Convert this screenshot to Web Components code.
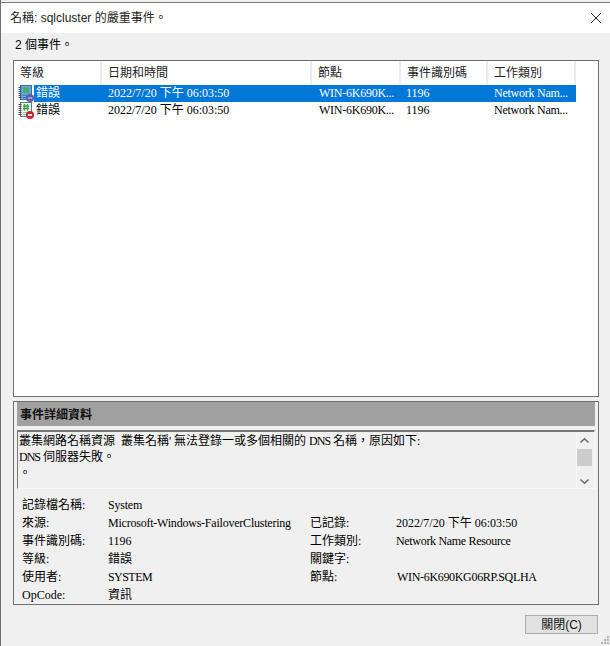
<!DOCTYPE html>
<html lang="zh-Hant">
<head>
<meta charset="utf-8">
<title>sqlcluster</title>
<style>
  html, body { margin: 0; padding: 0; background: #f0f0f0; }
  body { font: 12px/16px "Liberation Serif", "Noto Sans CJK TC", serif; color: #000; }
</style>
</head>
<body>
<event-dialog>
  <dialog-title slot="title">名稱: sqlcluster 的嚴重事件。</dialog-title>
  <span slot="count">2 個事件。</span>
  <event-list slot="list"></event-list>
  <event-details slot="details"></event-details>
  <push-button slot="button">關閉(C)</push-button>
</event-dialog>

<script>
const UI_FONT = '"Liberation Sans", "Noto Sans CJK TC", sans-serif';

class EventDialog extends HTMLElement {
  constructor() {
    super();
    this.attachShadow({ mode: 'open' });
    this.shadowRoot.innerHTML = `
      <style>
        :host { display: block; width: 610px; height: 646px; box-sizing: border-box; border-left: 1px solid #6f6f6f; padding-top: 2px; position: relative; overflow: hidden; }
        .count { height: 27px; padding: 3px 0 0 14px; box-sizing: border-box; line-height: 18px; font-family: ${UI_FONT}; }
        .main { padding: 0 11px 0 12px; display: flex; flex-direction: column; gap: 4px; }
        .foot { display: flex; justify-content: flex-end; padding: 10px 12px 0 0; }
        .grip { position: absolute; right: 1px; bottom: 2px; width: 8px; height: 8px; }
      </style>
      <slot name="title"></slot>
      <div class="count"><slot name="count"></slot></div>
      <div class="main">
        <slot name="list"></slot>
        <slot name="details"></slot>
      </div>
      <div class="foot"><slot name="button"></slot></div>
      <svg class="grip" viewBox="0 0 8 8" fill="#b4b4b4">
        <rect x="6" y="0" width="2" height="2"/>
        <rect x="3" y="3" width="2" height="2"/><rect x="6" y="3" width="2" height="2"/>
        <rect x="0" y="6" width="2" height="2"/><rect x="3" y="6" width="2" height="2"/><rect x="6" y="6" width="2" height="2"/>
      </svg>
    `;
  }
}

class DialogTitle extends HTMLElement {
  constructor() {
    super();
    this.attachShadow({ mode: 'open' });
    this.shadowRoot.innerHTML = `
      <style>
        :host { display: flex; align-items: center; justify-content: space-between; height: 31px; box-sizing: border-box; border-top: 1px solid #7a7a7a; background: #fff; padding: 0 9px; font: 12px/16px ${UI_FONT}; color: #222; }
        svg { width: 10px; height: 10px; }
      </style>
      <span><slot></slot></span>
      <svg viewBox="0 0 10 10" fill="none" stroke="#222" stroke-width="1"><path d="M0 0 L10 10 M10 0 L0 10"/></svg>
    `;
  }
}

class EventIcon extends HTMLElement {
  constructor() {
    super();
    this.attachShadow({ mode: 'open' });
    const sel = this.hasAttribute('selected');
    const badge = sel ? '#5f5ea6' : '#c9252d';
    const page = sel ? '#6aa5da' : '#eef1f3';
    const edge = sel ? '#3a6ea8' : '#6d7b88';
    const lines = sel ? '#3f7fc0' : '#a9b4bd';
    const hash = sel ? '#3fae5a' : '#2fa53c';
    this.shadowRoot.innerHTML = `
      <style>:host { display: block; width: 16px; height: 17px; } svg { display: block; }</style>
      <svg width="16" height="17" viewBox="0 0 16 17">
        <rect x="2.5" y="0.5" width="11" height="14" fill="${page}" stroke="${edge}"/>
        <path d="M0.5 2.5h3M0.5 4.5h3M0.5 6.5h3M0.5 8.5h3M0.5 10.5h3M0.5 12.5h3" stroke="${sel ? '#2c5a8c' : '#4a4a4a'}"/>
        <path d="M6.5 2v6.5M9.5 2v6.5M5 4h6M5 6.5h6" stroke="${hash}" stroke-width="1.3" fill="none"/>
        <path d="M5 10.5h4M5 12.5h3" stroke="${lines}"/>
        <circle cx="12" cy="13" r="4" fill="${badge}"/>
        <rect x="10" y="12" width="4" height="2" fill="${sel ? '#9a9ac8' : '#f7dcdc'}"/>
      </svg>
    `;
  }
}

class EventList extends HTMLElement {
  constructor() {
    super();
    this.attachShadow({ mode: 'open' });
    const cols = [['等級', 88], ['日期和時間', 210], ['節點', 89], ['事件識別碼', 87], ['工作類別', 88]];
    const row = (selected) => `
      <div class="row ${selected ? 'sel' : ''}">
        <event-icon ${selected ? 'selected' : ''}></event-icon>
        <span class="cell first">錯誤</span>
        <span class="cell date">2022/7/20 下午 06:03:50</span>
        <span class="cell node tight">WIN-6K690K...</span>
        <span class="cell id">1196</span>
        <span class="cell task tight">Network Nam...</span>
      </div>`;
    this.shadowRoot.innerHTML = `
      <style>
        :host { display: block; height: 337px; box-sizing: border-box; border: 1px solid #6e6e6e; background: #fff; }
        .head { display: flex; height: 24px; }
        .col { box-sizing: border-box; border-right: 2px solid #ebebeb; padding: 4px 0 0 6px; font-family: ${UI_FONT}; color: #222; line-height: 16px; }
        .row { display: grid; grid-template-columns: 16px 68px 210px 88px 88px 88px; height: 17px; line-height: 17px; padding-left: 4px; }
        .row.sel .cell { background: #0078d7; color: #fff; }
        .cell { padding-left: 2px; white-space: nowrap; overflow: hidden; }
        .tight { letter-spacing: -0.25px; }
        .date { padding-left: 6px; }
        .node { padding-left: 7px; }
        .id { padding-left: 6px; }
        .task { padding-left: 6px; }
      </style>
      <div class="head">${cols.map(([t, w]) => `<div class="col" style="width:${w}px">${t}</div>`).join('')}</div>
      ${row(true)}${row(false)}
    `;
  }
}

class EventDetails extends HTMLElement {
  constructor() {
    super();
    this.attachShadow({ mode: 'open' });
    const props = [
      ['記錄檔名稱:', 'System', '', ''],
      ['來源:', 'Microsoft-Windows-FailoverClustering', '已記錄:', '2022/7/20 下午 06:03:50'],
      ['事件識別碼:', '1196', '工作類別:', 'Network Name Resource'],
      ['等級:', '錯誤', '關鍵字:', ''],
      ['使用者:', 'SYSTEM', '節點:', 'WIN-6K690KG06RP.SQLHA'],
      ['OpCode:', '資訊', '', ''],
    ];
    // the source font runs narrower than Liberation Serif, by a different amount per string
    const spacing = { 'System': -0.22, 'Microsoft-Windows-FailoverClustering': -0.22, 'Network Name Resource': -0.32, 'SYSTEM': -0.55, 'WIN-6K690KG06RP.SQLHA': -0.32 };
    const val = (v, cls = '') => `<span class="${cls}" style="letter-spacing:${spacing[v] || 0}px">${v}</span>`;
    this.shadowRoot.innerHTML = `
      <style>
        :host { display: block; height: 204px; box-sizing: border-box; border: 1px solid #6e6e6e; padding: 0 3px 0 3px; }
        .bar { height: 24px; background: #a0a0a0; font-weight: 700; line-height: 23px; padding-left: 3px; font-family: "Noto Sans CJK TC", sans-serif; color: #111; }
        .box { display: flex; height: 59px; margin-top: 4px; box-sizing: border-box; border: 1px solid #f8f8f8; border-top: 2px solid #777; border-left: 1px solid #777; }
        .text { flex: 1; line-height: 16px; padding: 0 0 0 1px; margin-top: 1px; white-space: nowrap; }
        .q { display: inline-block; width: 5px; }
        .sp { display: inline-block; width: 6px; }
        .dns { letter-spacing: -1px; }
        .scroll { width: 15px; margin-right: 2px; display: flex; flex-direction: column; align-items: center; border-left: 1px solid #f8f8f8; }
        .scroll svg { display: block; margin: 6px 0 4px; }
        .thumb { width: 100%; height: 17px; background: #cdcdcd; margin-top: 2px; }
        .spacer { flex: 1; }
        .props { display: grid; grid-template-columns: 86px 202px 86px 1fr; grid-auto-rows: 18px; padding: 7px 0 0 5px; line-height: 18px; white-space: nowrap; }
        .nudge { padding-left: 1px; }
      </style>
      <div class="bar">事件詳細資料</div>
      <div class="box">
        <div class="text">叢集網路名稱資源<span class="sp"></span>叢集名稱<span class="q">'</span>無法登錄一或多個相關的 <span class="dns">DNS</span> 名稱，原因如下:<br><span class="dns">DNS</span> 伺服器失敗。<br>。</div>
        <div class="scroll">
          <svg width="9" height="5" viewBox="0 0 9 5"><path d="M0.5 4.5 L4.5 0.8 L8.5 4.5" fill="none" stroke="#606060" stroke-width="1.4"/></svg>
          <div class="thumb"></div>
          <div class="spacer"></div>
          <svg width="9" height="5" viewBox="0 0 9 5"><path d="M0.5 0.5 L4.5 4.2 L8.5 0.5" fill="none" stroke="#606060" stroke-width="1.4"/></svg>
        </div>
      </div>
      <div class="props">
        ${props.map(([a, b, c, d]) => `<span>${a}</span>${val(b)}<span>${c}</span>${val(d, a === '使用者:' ? 'nudge' : '')}`).join('')}
      </div>
    `;
  }
}

class PushButton extends HTMLElement {
  constructor() {
    super();
    this.attachShadow({ mode: 'open' });
    this.shadowRoot.innerHTML = `
      <style>
        :host { display: block; }
        button { display: block; width: 73px; height: 19px; padding: 0; background: #e1e1e1; border: 1px solid #adadad; font: 12px/16px ${UI_FONT}; color: #111; }
      </style>
      <button><slot></slot></button>
    `;
  }
}

customElements.define('event-dialog', EventDialog);
customElements.define('dialog-title', DialogTitle);
customElements.define('event-icon', EventIcon);
customElements.define('event-list', EventList);
customElements.define('event-details', EventDetails);
customElements.define('push-button', PushButton);
</script>
</body>
</html>
